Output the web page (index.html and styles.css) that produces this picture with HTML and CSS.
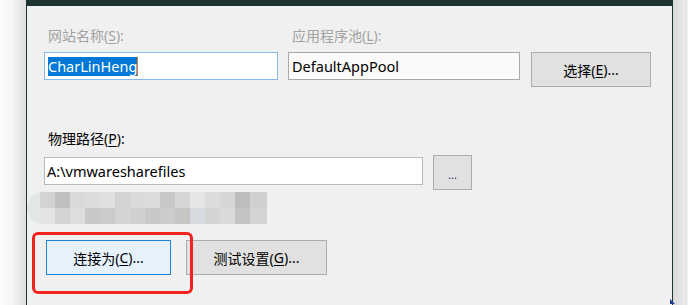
FILE: index.html
```html
<!DOCTYPE html>
<html lang="zh-CN">
<head>
    <meta charset="UTF-8">
    <title>添加网站</title>
    <link rel="stylesheet" href="styles.css">
</head>
<body>
    <div class="gutter-left"></div>

    <div class="dialog">
        <!-- Site name / app pool -->
        <div class="site-grid">
            <div class="label disabled">网站名称(<u>S</u>):</div>
            <div class="label disabled">应用程序池(<u>L</u>):</div>
            <div></div>

            <div class="textbox focused"><span class="selected">CharLinHeng</span></div>
            <div class="textbox readonly">DefaultAppPool</div>
            <button class="btn btn-select">选择(<u>E</u>)...</button>
        </div>

        <!-- Physical path -->
        <div class="path-block">
            <div class="label">物理路径(<u>P</u>):</div>
            <div class="path-row">
                <div class="textbox path-box">A:\vmwaresharefiles</div>
                <button class="btn btn-browse">...</button>
            </div>
        </div>

        <!-- Blurred area -->
        <div class="mosaic">
            <div class="mosaic-row row-a"></div>
            <div class="mosaic-row row-b"></div>
        </div>

        <!-- Connect buttons -->
        <div class="action-row">
            <button class="btn btn-hot btn-connect">连接为(<u>C</u>)...</button>
            <button class="btn btn-test">测试设置(<u>G</u>)...</button>
        </div>

        <!-- Annotation -->
        <div class="highlight"></div>

        <svg class="cursor" width="6" height="6" viewBox="0 0 6 6">
            <path d="M0 0 L5 5 L0 5 Z" fill="#1c3f94"/>
        </svg>
    </div>

    <div class="gutter-right"></div>
</body>
</html>
```

FILE: styles.css
```css
* {
    margin: 0;
    padding: 0;
    box-sizing: border-box;
}

body {
    width: 695px;
    height: 305px;
    overflow: hidden;
    display: flex;
    background: #ffffff;
    font-family: "Noto Sans", "Noto Sans CJK SC", sans-serif;
    color: #000000;
}

.gutter-left {
    width: 26px;
    flex: none;
    background: linear-gradient(to right, #fbfbfb 0, #f6f6f6 12px, #dedede 26px);
}

.gutter-right {
    flex: 1;
    background: linear-gradient(to right, #d8d8d8 0, #ececec 12px, #e2e2e2 13px, #e6e6e6 14px, #ffffff 15px);
}

.dialog {
    position: relative;
    width: 647px;
    flex: none;
    height: 305px;
    background: #f0f0f0;
    border-top: 6px solid #1f3430;
    border-left: 1px solid #1f3430;
    border-right: 1px solid #1f3430;
    padding: 20px 0 0 17px;
}

.label {
    font-size: 14px;
    line-height: 19px;
    padding-left: 4px;
}

.label.disabled {
    color: #a2a2a2;
}

u {
    text-decoration-thickness: 1px;
    text-underline-offset: 2px;
}

.site-grid {
    display: grid;
    grid-template-columns: 234px 232px 121px;
    column-gap: 10px;
    row-gap: 7px;
    align-items: start;
}

.textbox {
    height: 28px;
    border: 1px solid #b9b9b9;
    background: #ffffff;
    font-size: 14.5px;
    line-height: 24px;
    padding: 1px 3px;
    white-space: nowrap;
}

.textbox.focused {
    border-color: #86b9ea;
    padding-top: 4px;
    line-height: 19px;
}

.textbox.readonly {
    background: #fafafa;
    border-color: #a9a9a9;
}

.selected {
    display: inline-block;
    background: #0078d7;
    color: #ffffff;
    height: 19px;
    border-right: 1px solid #e0782c;
}

.btn {
    display: flex;
    align-items: center;
    justify-content: center;
    height: 35px;
    border: 1px solid #adadad;
    background: #e1e1e1;
    font-family: "Noto Sans", "Noto Sans CJK SC", sans-serif;
    font-size: 14px;
    color: #000000;
}

.btn-select {
    margin-left: 1px;
}

.btn-hot {
    background: #e5f1fb;
    border-color: #1b84d9;
}

.path-block {
    margin-top: 42px;
}

.path-row {
    display: flex;
    align-items: flex-start;
    gap: 10px;
    margin-top: 7px;
}

.path-box {
    width: 379px;
    margin-top: 2px;
    padding-left: 2px;
}

.btn-browse {
    width: 39px;
    padding-top: 4px;
    font-size: 11px;
    color: #2a2a5a;
}

.mosaic {
    margin: 2px 0 0 -17px;
    width: 240px;
    height: 32px;
    padding-left: 13px;
    background: #e2e6e5;
    border-radius: 16px 0 0 16px;
}

.mosaic-row {
    height: 16px;
}

.row-a {
    background: linear-gradient(to right,
        #d5d3d2 0 15px, #c0c0c0 15px 30px, #d8dada 30px 45px, #dcdcdc 45px 60px,
        #e0e0e0 60px 75px, #d3d3d3 75px 90px, #dcdad9 90px 105px, #dcdcdc 105px 120px,
        #c8c8c8 120px 135px, #d5d7d7 135px 150px, #e4e6e6 150px 165px, #dcdcdc 165px 180px,
        #d8d6d5 180px 195px, #bcbdbe 195px 210px, #cfd0d2 210px 227px);
}

.row-b {
    background: linear-gradient(to right,
        #e3e3e3 0 15px, #d4d4d4 15px 30px, #dddddd 30px 45px, #c8c8c8 45px 60px,
        #cbcbcb 60px 75px, #d4d4d4 75px 90px, #d0d0d0 90px 105px, #c8c8c8 105px 120px,
        #cccccc 120px 135px, #c8c6c4 135px 150px, #d6dade 150px 165px, #d4d4d4 165px 180px,
        #dadada 180px 195px, #c4c4c2 195px 210px, #d2d4d6 210px 227px);
}

.action-row {
    display: flex;
    gap: 15px;
    margin: 16px 0 0 2px;
}

.btn-connect {
    width: 125px;
}

.btn-test {
    width: 141px;
}

.highlight {
    position: absolute;
    left: 5px;
    top: 226px;
    width: 161px;
    height: 62px;
    border: 3px solid #f2231f;
    border-radius: 6px;
    pointer-events: none;
}

.cursor {
    position: absolute;
    right: -4px;
    bottom: 0;
}
```
